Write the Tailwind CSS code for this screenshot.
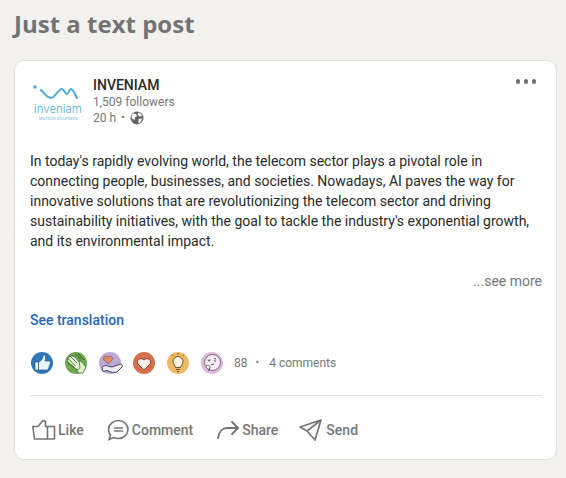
<!DOCTYPE html>
<html lang="en">

<head>
    <meta charset="UTF-8">
    <title>Just a text post</title>
    <script src="https://cdn.jsdelivr.net/npm/@tailwindcss/browser@4"></script>
</head>

<body class="bg-[#f3f1ee] h-[478px] overflow-hidden font-['Roboto',sans-serif]">
    <h1 class="pl-[14px] pt-[7px] h-[60px] text-[24px] leading-[34px] font-bold text-[#737373] font-['Open_Sans',sans-serif]">Just a text post</h1>

    <!-- post card -->
    <div class="relative mx-[14px] w-[543px] h-[400px] bg-white rounded-[10px] border border-[#e3e1dc] px-[15px]">
        <button class="absolute right-[20px] top-[18px] flex gap-[3.500px]">
            <span class="w-[4.500px] h-[4.500px] rounded-full bg-[#707070]"></span>
            <span class="w-[4.500px] h-[4.500px] rounded-full bg-[#707070]"></span>
            <span class="w-[4.500px] h-[4.500px] rounded-full bg-[#707070]"></span>
        </button>

        <!-- header -->
        <div class="flex pt-[15px] h-[90px]">
            <div class="w-[52px] h-[48px] mr-[11px] mt-[3px] flex flex-col items-start">
                <svg width="50" height="24" viewBox="0 0 50 24" fill="none" stroke="#4fa8da" stroke-width="2" stroke-linecap="round" stroke-linejoin="round">
                    <circle cx="5" cy="8" r="1.800" fill="#4fa8da" stroke="none" />
                    <path d="M11 11c3 3 6 8 10 8s7-9 11-9c2 0 3 5 5 5s2-5 4-5 4 5 6 9" />
                </svg>
                <span class="ml-[4px] mt-[1px] text-[11.500px] leading-[11px] font-light text-[#55a9d9] font-['Inter',sans-serif]">inveniam</span>
                <span class="ml-[9px] mt-[1px] text-[4.500px] leading-[6px] text-[#8cc5e6] whitespace-nowrap">lee-hove Mountains</span>
            </div>
            <div>
                <div class="text-[14px] leading-[18px] font-medium text-[#2a2a2a]">INVENIAM</div>
                <div class="text-[12px] leading-[16px] text-[#777]">1,509 followers</div>
                <div class="flex items-center text-[12px] leading-[16px] text-[#777]">
                    20 h
                    <span class="mx-[5px] text-[11px]">•</span>
                    <svg width="14" height="14" viewBox="0 0 14 14">
                        <circle cx="7" cy="7" r="6.500" fill="#666" />
                        <path d="M3 2.500l3 .5 1 2-2 1.500-.5 2.500L2 7.500 1.500 5zM8 1.500l3 1.500 1 2-2.500.5L8 4zM8.500 8l3.500-.5-1 3.500-2.500 1.500z" fill="#fff" />
                    </svg>
                </div>
            </div>
        </div>

        <!-- text -->
        <p class="text-[14px] leading-[20px] text-[#2a2a2a] whitespace-nowrap">
            In today's rapidly evolving world, the telecom sector plays a pivotal role in<br>
            connecting people, businesses, and societies. Nowadays, AI paves the way for<br>
            innovative solutions that are revolutionizing the telecom sector and driving<br>
            sustainability initiatives, with the goal to tackle the industry's exponential growth,<br>
            and its environmental impact.
        </p>
        <div class="mt-[20px] mr-[-1px] text-right text-[14px] leading-[20px] text-[#777]">...see more</div>
        <div class="mt-[19px] text-[14px] leading-[20px] font-medium text-[#2a65b5]">See translation</div>

        <!-- reactions -->
        <div class="flex items-center mt-[21px] h-[24px] pl-[1px] text-[12px] text-[#777]">
            <div class="flex gap-[12px]">
                <svg width="22" height="22" viewBox="0 0 22 22">
                    <circle cx="11" cy="11" r="11" fill="#2f78b5" />
                    <path d="M4 10h3.500v8H4zM7.500 10.500l3.500-3 1.500-4.500c1.800-.3 2.500 1.500 2 3.500l-.5 2.500h4c1.300 0 1.800 1.200 1.300 2.300l-1.800 5.200c-.3 1-1 1.500-2 1.500H7.500z" fill="#e8f6fe" stroke="#1f4f7a" stroke-width=".6" />
                </svg>
                <svg width="22" height="22" viewBox="0 0 22 22">
                    <circle cx="11" cy="11" r="11" fill="#6fa84f" />
                    <path d="M10 10l6-1 5 6-3 6h-5z" fill="#dff3cf" stroke="#2e5a22" stroke-width=".7" />
                    <path d="M2 9l9 8c2 1 4 0 4-2l-1-5-4-5-5-2z" fill="#eaf7dd" stroke="#2e5a22" stroke-width=".7" />
                    <path d="M5 4l7 7M3 6.500l7 7M2.500 10l6 5.500M10 1.500l6 6M13 1l6 7" stroke="#2e5a22" stroke-width=".9" fill="none" />
                </svg>
                <svg width="26" height="22" viewBox="0 0 26 22" class="overflow-visible">
                    <circle cx="11" cy="11" r="11" fill="#b9a8d2" />
                    <path d="M9 11.500L5 8c-2-2.500 1-5 4-3 3-2 6 .5 4 3z" fill="#e08a6a" stroke="#7a4a3a" stroke-width=".6" />
                    <path d="M3 15.500c2-2.500 5-2 7-1l3 .5 7-2.500c3-1 4 1 3 2.500l-4 4c-1 1.500-5 2-7 1l-4-1.500-4 1z" fill="#efe9f6" stroke="#3c3450" stroke-width=".9" />
                </svg>
                <svg width="22" height="22" viewBox="0 0 22 22" class="ml-[-4px]">
                    <circle cx="11" cy="11" r="11" fill="#d4704d" />
                    <path d="M11 18l-6-6c-2.500-3.500 2.500-7.500 6-4 3.500-3.500 8.500.5 6 4z" fill="#fdf0ea" stroke="#6e3423" stroke-width=".9" />
                </svg>
                <svg width="22" height="22" viewBox="0 0 22 22">
                    <circle cx="11" cy="11" r="11" fill="#efb864" />
                    <path d="M8.500 15.500c0-2-2.500-3-2.500-6a5 5 0 0 1 10 0c0 3-2.500 4-2.500 6z" fill="#fdf6e0" stroke="#5a4420" stroke-width=".9" />
                    <path d="M9 17.500h4M10 19.500h2M11 1v1.500M5 2.500l1 1.200M17 2.500l-1 1.200" stroke="#5a4420" stroke-width=".9" fill="none" />
                </svg>
                <svg width="22" height="22" viewBox="0 0 22 22">
                    <circle cx="11" cy="11" r="11" fill="#dcbcdc" />
                    <circle cx="11.500" cy="10.500" r="8" fill="#f5eef5" stroke="#5f4a64" stroke-width=".8" />
                    <path d="M7.500 8.500l2-.5M13 6.500l2 .5M8 7.500v2M14 8v2M10 13l3-1M5 14c2-1.500 4-.5 4 1.500l-1.500 3.500" stroke="#5f4a64" stroke-width="1" fill="none" />
                </svg>
            </div>
            <span class="ml-[11px]">88</span>
            <span class="mx-[8px] text-[11px]">•</span>
            <span class="ml-[2px]">4 comments</span>
        </div>

        <div class="mt-[20px] h-px bg-[#e0e0e0] w-[512px]"></div>

        <!-- actions -->
        <div class="flex items-center mt-[23px] pl-[2px] text-[14px] font-medium text-[#777]">
            <div class="flex items-center gap-[2px] mr-[23px]">
                <svg width="24" height="22" viewBox="0 0 24 22" fill="none" stroke="#757575" stroke-width="1.600" stroke-linejoin="round">
                    <path d="M.8 7.500H6L11 1.500l2.500 1v5H22.500V20H2.500z" />
                    <path d="M15.500 7.500V20" />
                </svg>
                Like
            </div>
            <div class="flex items-center gap-[3px] mr-[24px]">
                <svg width="22" height="22" viewBox="0 0 22 22" fill="none" stroke="#757575" stroke-width="1.600" stroke-linecap="round">
                    <path d="M11.500 1.500c5 0 9.500 4 9.500 9s-4.500 9-9.500 9c-2 0-3.500-.5-5-1l-4.500 2 1.500-4c-1-1.500-2-4-2-6 0-5 5-9 10-9z" />
                    <path d="M7.500 9h8M7.500 12h8" />
                </svg>
                Comment
            </div>
            <div class="flex items-center gap-[3px] mr-[21px]">
                <svg width="22" height="18" viewBox="0 0 22 18" fill="none" stroke="#757575" stroke-width="1.800" stroke-linecap="round" stroke-linejoin="round">
                    <path d="M1 17c1-7 5-10 9-10h10" />
                    <path d="M15 1l6 6-6 6" />
                </svg>
                Share
            </div>
            <div class="flex items-center gap-[4px]">
                <svg width="23" height="22" viewBox="0 0 23 22" fill="none" stroke="#757575" stroke-width="1.700" stroke-linejoin="round">
                    <path d="M22 1L1 8l7 4 8 9zM22 1L8 12" />
                </svg>
                Send
            </div>
        </div>
    </div>
</body>

</html>
